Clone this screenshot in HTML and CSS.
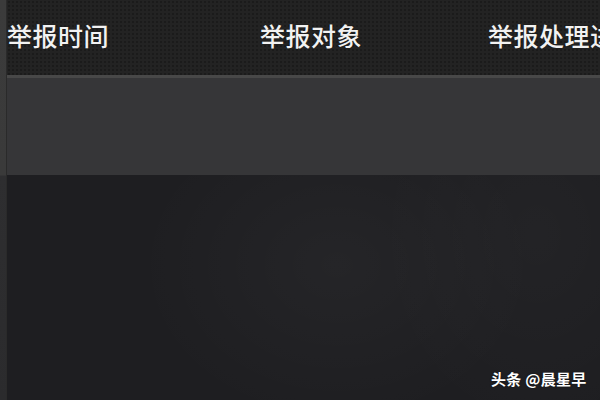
FILE: index.html
```html
<!DOCTYPE html>
<html lang="zh">
<head>
<meta charset="utf-8">
<link rel="stylesheet" href="styles.css">
</head>
<body>
<div class="page">
  <div class="edge"></div>
  <div class="main">
    <div class="header">
      <div class="col c1">举报时间</div>
      <div class="col c2">举报对象</div>
      <div class="col c3">举报处理进度</div>
    </div>
    <div class="divider"></div>
    <div class="band"></div>
    <div class="body"></div>
  </div>
</div>
<div class="watermark">头条 @晨星早</div>
</body>
</html>
```
FILE: styles.css
```css
html, body {
  margin: 0;
  padding: 0;
  width: 600px;
  height: 400px;
  overflow: hidden;
  background: #1d1d20;
  font-family: "Noto Sans CJK SC", "Noto Sans", sans-serif;
}
.page {
  display: flex;
  width: 600px;
  height: 400px;
}
.edge {
  width: 7px;
  flex: none;
  background: linear-gradient(to bottom, #3b3b3b 0, #3a3a3a 175px, #2e2e30 176px, #2b2b2d 100%);
  border-right: 1px solid #2a2a2a;
  box-sizing: border-box;
}
.main {
  flex: 1;
  display: flex;
  flex-direction: column;
  min-width: 0;
}
.header {
  height: 75px;
  flex: none;
  display: grid;
  grid-template-columns: 253px 228px 1fr;
  align-items: center;
  background-color: #232323;
  background-image: radial-gradient(circle, #1b1b1b 0.8px, transparent 1.2px);
  background-size: 4px 4px;
  white-space: nowrap;
  overflow: hidden;
}
.col {
  color: #f2f2f2;
  font-size: 25px;
  font-weight: 500;
  letter-spacing: 0.5px;
  line-height: 1;
  padding-bottom: 4px;
  text-shadow: 0 0 1px rgba(0,0,0,0.6);
}
.divider {
  height: 3px;
  flex: none;
  background: #484848;
}
.band {
  height: 97px;
  flex: none;
  background: #363638;
}
.body {
  flex: 1;
  background:
    radial-gradient(ellipse 200px 160px at 330px 90px, rgba(255,255,255,0.03), transparent),
    radial-gradient(ellipse 160px 200px at 530px 60px, rgba(255,255,255,0.025), transparent),
    #1e1e21;
}
.watermark {
  position: absolute;
  left: 491px;
  top: 369px;
  color: #ffffff;
  font-size: 15px;
  font-weight: 700;
  line-height: 20px;
  letter-spacing: 0.3px;
  text-shadow: 0 0 2px rgba(0,0,0,0.5);
}
```
